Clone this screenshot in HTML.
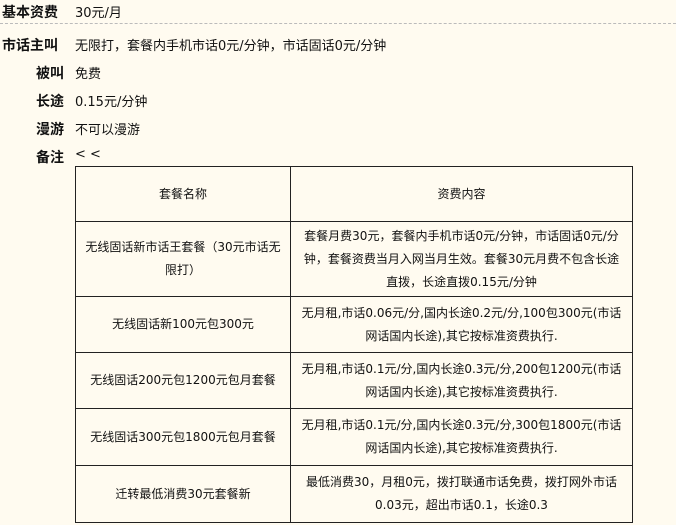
<!DOCTYPE html>
<html><head><meta charset="utf-8"><style>
body{margin:0;width:676px;height:525px;overflow:hidden;background:#fffbf0;font-family:"Liberation Sans","WenQuanYi Zen Hei","Noto Sans CJK SC",sans-serif;color:#111;font-size:13px;}
.l{position:absolute;font-weight:bold;font-size:14px;white-space:nowrap}
.v{position:absolute;left:75px;font-size:13px;white-space:nowrap;font-family:"DejaVu Sans","WenQuanYi Zen Hei",sans-serif;}
.dash{position:absolute;left:0;top:23px;width:676px;border-top:1px dashed #bbb}
table{position:absolute;left:75px;top:166px;border-collapse:collapse;font-size:12px;font-family:"DejaVu Sans","WenQuanYi Zen Hei",sans-serif;}
td{border:1px solid #222;text-align:center;line-height:23px;padding:0 5px;}
</style></head><body>
<div class="l" style="top:2px;left:2px">基本资费</div><div class="v" style="top:2px">30元/月</div>
<div class="dash"></div>
<div class="l" style="top:35px;left:2px">市话主叫</div><div class="v" style="top:35px">无限打，套餐内手机市话0元/分钟，市话固话0元/分钟</div>
<div class="l" style="top:63px;left:36px">被叫</div><div class="v" style="top:63px">免费</div>
<div class="l" style="top:91px;left:36px">长途</div><div class="v" style="top:91px">0.15元/分钟</div>
<div class="l" style="top:119px;left:36px">漫游</div><div class="v" style="top:119px">不可以漫游</div>
<div class="l" style="top:147px;left:36px">备注</div><div class="v" style="top:147px">&lt; &lt;</div>
<table>
<tr style="height:55px"><td style="width:204px">套餐名称</td><td style="width:331px">资费内容</td></tr>
<tr style="height:75px"><td>无线固话新市话王套餐（30元市话无限打）</td><td style="white-space:nowrap">套餐月费30元，套餐内手机市话0元/分钟，市话固话0元/分<br>钟，套餐资费当月入网当月生效。套餐30元月费不包含长途<br>直拨，长途直拨0.15元/分钟</td></tr>
<tr style="height:56px"><td>无线固话新100元包300元</td><td>无月租,市话0.06元/分,国内长途0.2元/分,100包300元(市话网话国内长途),其它按标准资费执行.</td></tr>
<tr style="height:56px"><td>无线固话200元包1200元包月套餐</td><td>无月租,市话0.1元/分,国内长途0.3元/分,200包1200元(市话网话国内长途),其它按标准资费执行.</td></tr>
<tr style="height:57px"><td>无线固话300元包1800元包月套餐</td><td>无月租,市话0.1元/分,国内长途0.3元/分,300包1800元(市话网话国内长途),其它按标准资费执行.</td></tr>
<tr style="height:57px"><td>迁转最低消费30元套餐新</td><td>最低消费30，月租0元，拨打联通市话免费，拨打网外市话0.03元，超出市话0.1，长途0.3</td></tr>
</table>
</body></html>
